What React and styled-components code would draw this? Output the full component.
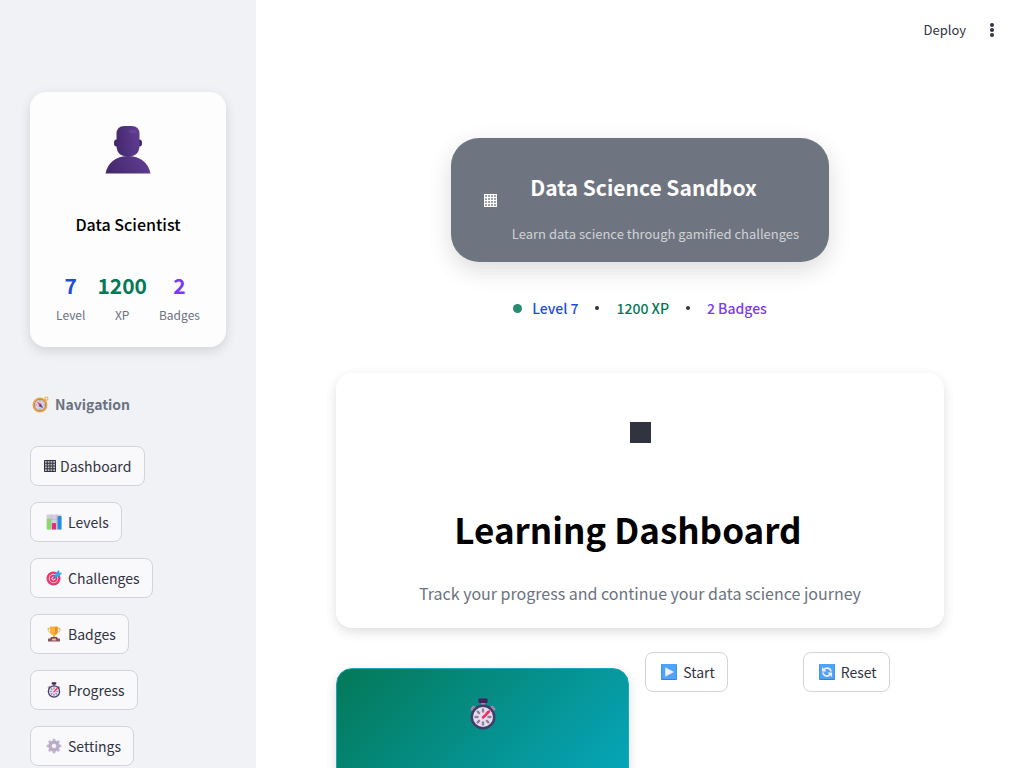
import React from "react";
import styled, { createGlobalStyle } from "styled-components";

const GlobalStyle = createGlobalStyle`
  *, *::before, *::after { box-sizing: border-box; }
  body {
    margin: 0;
    background: #ffffff;
    color: #31333f;
    font-family: "Source Sans Pro", "Noto Sans CJK SC", "Noto Sans", sans-serif;
    font-size: 14px;
    line-height: 24px;
  }
  h1, h2, h3, p, dl, dd, ul { margin: 0; padding: 0; }
  button { font: inherit; color: inherit; cursor: pointer; }
`;

const Shell = styled.div`
  display: flex;
  height: 100vh;
  overflow: hidden;
`;

const Sidebar = styled.aside`
  flex: 0 0 25%;
  max-width: 300px;
  overflow-y: auto;
  scrollbar-width: none;
  padding: 92px 30px 32px;
  background: #f0f2f6;
`;

const Main = styled.main`
  flex: 1;
  min-width: 0;
  overflow-y: auto;
  scrollbar-width: none;
`;

const Topbar = styled.header`
  display: flex;
  align-items: center;
  justify-content: flex-end;
  gap: 10px;
  height: 60px;
  padding-right: 16px;
`;

const PlainButton = styled.button`
  display: flex;
  align-items: center;
  justify-content: center;
  min-width: 32px;
  height: 32px;
  padding: 0;
  border: 0;
  background: none;
  font-size: 13px;
`;

const Content = styled.div`
  display: flex;
  flex-direction: column;
  padding: 78px 80px 80px;
`;

const ProfileCard = styled.section`
  display: flex;
  flex-direction: column;
  align-items: center;
  height: 255px;
  padding-top: 32px;
  border-radius: 16px;
  background: #fdfdfe;
  box-shadow: 0 4px 12px rgba(0, 0, 0, 0.13);
`;

const ProfileName = styled.h3`
  margin-top: 36px;
  color: #000000;
  font-size: 16px;
  font-weight: 500;
  line-height: 28px;
`;

const Stats = styled.dl`
  display: flex;
  justify-content: center;
  gap: 12px;
  margin-top: 29px;
`;

const Stat = styled.div`
  display: flex;
  flex-direction: column-reverse;
  align-items: center;
`;

const StatValue = styled.dd`
  color: ${(p) => p.$color};
  font-size: 21px;
  font-weight: 700;
  line-height: 36px;
`;

const StatLabel = styled.dt`
  color: #6b7280;
  font-size: 12px;
  line-height: 24px;
`;

const NavTitle = styled.h2`
  display: flex;
  align-items: center;
  gap: 6px;
  margin: 45px 0 30px 2px;
  color: #6b7280;
  font-size: 14px;
  font-weight: 700;
  line-height: 24px;
`;

const NavList = styled.nav`
  display: flex;
  flex-direction: column;
  align-items: flex-start;
  gap: 16px;
`;

const Button = styled.button`
  display: inline-flex;
  align-items: center;
  gap: ${(p) => (p.$tight ? 4 : 6)}px;
  height: 40px;
  padding: 0 ${(p) => (p.$tight ? 13 : 12)}px 0 ${(p) => (p.$tight ? 13 : 15)}px;
  border: 1px solid #d2d4d9;
  border-radius: 8px;
  background: ${(p) => (p.$plain ? "#ffffff" : "#f9f9fb")};
  white-space: nowrap;
`;

const Banner = styled.section`
  display: flex;
  align-items: center;
  align-self: center;
  gap: 15px;
  height: 124px;
  padding: 0 30px 0 33px;
  border-radius: 28px;
  background: #6f7580;
  color: #ffffff;
  box-shadow: 0 8px 24px rgba(0, 0, 0, 0.14);
`;

const BannerText = styled.div`
  display: flex;
  flex-direction: column;
  gap: 19px;
  padding-top: 16px;
`;

const BannerTitle = styled.h2`
  padding-right: 24px;
  font-size: 21px;
  font-weight: 700;
  line-height: 32px;
  text-align: center;
`;

const BannerNote = styled.p`
  color: #d0d2d6;
  font-size: 13px;
  line-height: 24px;
  text-align: center;
`;

const StatusLine = styled.div`
  display: flex;
  align-items: center;
  justify-content: center;
  gap: 17px;
  margin-top: 34px;
  font-weight: 500;
`;

const StatusItem = styled.span`
  display: inline-flex;
  align-items: center;
  gap: 10px;
  color: ${(p) => p.$color};
`;

const Dot = styled.span`
  width: ${(p) => p.$size}px;
  height: ${(p) => p.$size}px;
  border-radius: 50%;
  background: ${(p) => p.$color};
`;

const Hero = styled.section`
  display: flex;
  flex-direction: column;
  align-items: center;
  height: 255px;
  margin-top: 53px;
  padding-top: 49px;
  border-radius: 16px;
  background: #ffffff;
  box-shadow: 0 4px 12px rgba(0, 0, 0, 0.13);
`;

const HeroTitle = styled.h1`
  margin-top: 58px;
  padding-right: 24px;
  color: #000000;
  font-size: 35px;
  font-weight: 700;
  line-height: 56px;
`;

const HeroNote = styled.p`
  margin-top: 23px;
  color: #6b7280;
  font-size: 16px;
  line-height: 26px;
`;

const Columns = styled.div`
  display: flex;
  gap: 16px;
  margin-top: 24px;
`;

const Column = styled.div`
  flex: 1 1 calc(${(p) => p.$share}% - 16px);
  min-width: 0;
`;

const TimerCard = styled.section`
  display: flex;
  justify-content: center;
  height: 220px;
  margin-top: 16px;
  padding-top: 29px;
  border: 1px solid #18a9ba;
  border-radius: 16px;
  background: linear-gradient(135deg, #047857, #06a7bd 80%);
  box-shadow: 0 4px 12px rgba(0, 0, 0, 0.13);
`;

function Avatar() {
  return (
    <svg width="48" height="50" viewBox="0 0 48 50" aria-hidden="true">
      <defs>
        <linearGradient id="skin" x1="0" y1="0.4" x2="1" y2="0.2">
          <stop offset="0" stopColor="#452a6e" />
          <stop offset="1" stopColor="#603d94" />
        </linearGradient>
      </defs>
      <path d="M1.500 49.500C3.500 39 12 32 24 32s20.500 7 22.500 17.500z" fill="url(#skin)" />
      <ellipse cx="12.500" cy="19" rx="2.500" ry="3.500" fill="#3d2368" />
      <ellipse cx="35.500" cy="19" rx="2.500" ry="3.500" fill="#3d2368" />
      <path d="M12.500 10Q12.500 2 20.500 2h7Q35.500 2 35.500 10v12Q35 32.500 24 32.500T12.500 22z" fill="url(#skin)" />
      <ellipse cx="29" cy="7.500" rx="4" ry="2" fill="#70499f" opacity="0.6" />
    </svg>
  );
}

function Grid({ size = 12, color = "#31333f" }) {
  return (
    <svg width={size} height={size} viewBox="0 0 12 12" aria-hidden="true">
      <rect width="12" height="12" fill={color} opacity="0.3" />
      <path
        d="M.5.500h11v11H.5zM3.250.500v11M6 .500v11M8.750.500v11M.5 3.250h11M.5 6h11M.5 8.750h11"
        fill="none"
        stroke={color}
        strokeWidth="1"
      />
    </svg>
  );
}

function Stopwatch({ width = 16, height = 16 }) {
  const ticks = [0, 45, 90, 135, 180, 225, 270, 315];
  return (
    <svg width={width} height={height} viewBox="0 0 32 32" aria-hidden="true">
      <path d="M14 3h4v6h-4z" fill="#998ea4" />
      <rect x="11.500" y=".5" width="9" height="4.500" rx="1" fill="#45205f" />
      <path d="M4.500 11l2-2.500 2.500 1.500-3 3zM27.500 11l-2-2.500-2.500 1.500 3 3z" fill="#998ea4" stroke="#998ea4" strokeWidth="2" strokeLinejoin="round" />
      <circle cx="16" cy="19" r="12.500" fill="#433b6b" />
      <circle cx="16" cy="19" r="10" fill="#e6dff0" />
      {ticks.map((a) => (
        <path key={a} d="M16 11.500v2" stroke="#8e819d" strokeWidth="2.400" strokeLinecap="round" transform={`rotate(${a} 16 19)`} />
      ))}
      <path d="M16 19.500L22 13.500" stroke="#f82f60" strokeWidth="2.500" strokeLinecap="round" />
    </svg>
  );
}

function Compass() {
  return (
    <svg width="17" height="17" viewBox="0 0 32 32" aria-hidden="true">
      <circle cx="27" cy="5" r="3" fill="none" stroke="#f4b13d" strokeWidth="2" />
      <path d="M22 8l4-3 2 3-4 3z" fill="#f2b247" />
      <circle cx="15" cy="17" r="14" fill="#e9a53f" />
      <circle cx="15" cy="17" r="10.500" fill="#d8d1e1" stroke="#b07b53" strokeWidth="1.500" />
      <path d="M9 11l9 4-4 4z" fill="#e74667" />
      <path d="M21 23l-9-4 5-4z" fill="#5f4778" />
      <path d="M15 8v3M15 23v3M6 17h3M21 17h3" stroke="#9b8aa9" strokeWidth="1.500" />
    </svg>
  );
}

function Chart() {
  return (
    <svg width="16" height="16" viewBox="0 0 32 32" aria-hidden="true">
      <rect x="1" y="1" width="30" height="30" rx="2" fill="#d5cddd" />
      <path d="M1 11h30M1 21h30M11 1v30M21 1v30" stroke="#bbb1c5" strokeWidth="1" />
      <path d="M2 31V11q0-2 2-2h4q2 0 2 2v20z" fill="#86db65" />
      <path d="M12 31V20q0-2 2-2h4q2 0 2 2v11z" fill="#e22c77" />
      <path d="M23 31V6q0-2 2-2h4q2 0 2 2v25z" fill="#258be3" />
    </svg>
  );
}

function Target() {
  return (
    <svg width="16" height="16" viewBox="0 0 32 32" aria-hidden="true">
      <circle cx="15" cy="17" r="14" fill="#e7386f" />
      <circle cx="15" cy="17" r="9.500" fill="#eec6da" />
      <circle cx="15" cy="17" r="7.500" fill="#e7386f" />
      <circle cx="15" cy="17" r="4" fill="#f1dce9" />
      <circle cx="15" cy="17" r="2" fill="#e7386f" />
      <path d="M15 17L26 7" stroke="#247bb9" strokeWidth="2.500" />
      <path d="M18 14l1-8 7-6 1 5 5 1-6 7z" fill="#35a7ef" />
    </svg>
  );
}

function Trophy() {
  return (
    <svg width="16" height="16" viewBox="0 0 32 32" aria-hidden="true">
      <path d="M9 4.500H4q0 9 8 9.500M23 4.500h5q0 9-8 9.500" fill="none" stroke="#edaa42" strokeWidth="2" />
      <path d="M8 1h16v7q0 9-6 11v5h-4v-5Q8 17 8 8z" fill="#f6b335" />
      <path d="M18 2h5v7q0 6-5 8z" fill="#e98b31" />
      <path d="M10 22h12l2 4H8z" fill="#76455b" />
      <rect x="4" y="25" width="24" height="6" rx="1" fill="#8b5366" />
      <rect x="12" y="25" width="8" height="4" rx="1" fill="#f2c267" />
    </svg>
  );
}

function Gear() {
  const teeth = [0, 45, 90, 135, 180, 225, 270, 315];
  return (
    <svg width="16" height="16" viewBox="0 0 32 32" aria-hidden="true">
      {teeth.map((a) => (
        <path key={a} d="M12.500 8l1-6q2.500-2 5 0l1 6z" fill="#c3b7d3" transform={`rotate(${a} 16 16)`} />
      ))}
      <circle cx="16" cy="16" r="8" fill="none" stroke="#b9acca" strokeWidth="6" />
      <circle cx="16" cy="16" r="5.500" fill="#f4f1f8" stroke="#958aa3" strokeWidth="1" />
    </svg>
  );
}

function BlueTile({ children }) {
  return (
    <svg width="16" height="16" viewBox="0 0 32 32" aria-hidden="true">
      <rect width="32" height="32" rx="2" fill="#3c80dc" />
      <rect x="1" width="30" height="30" rx="2" fill="#4ca5fa" />
      {children}
    </svg>
  );
}

function Play() {
  return (
    <BlueTile>
      <path d="M9 7.500v17L25 16z" fill="#f5eefb" stroke="#f5eefb" strokeLinejoin="round" />
    </BlueTile>
  );
}

function Cycle() {
  return (
    <BlueTile>
      <path d="M24 15q-1-7-8-7-4 0-6 3M8 17q1 7 8 7 4 0 6-3" fill="none" stroke="#f5eefb" strokeWidth="3.500" />
      <path d="M6 6v9h9zM26 26v-9h-9z" fill="#f5eefb" />
    </BlueTile>
  );
}

function Kebab() {
  return (
    <svg width="6" height="16" viewBox="0 0 6 16" fill="#31333f" aria-hidden="true">
      <circle cx="3" cy="3" r="2" />
      <circle cx="3" cy="8" r="2" />
      <circle cx="3" cy="13" r="2" />
    </svg>
  );
}

const stats = [
  { label: "Level", value: "7", color: "#1d4ed8" },
  { label: "XP", value: "1200", color: "#047857" },
  { label: "Badges", value: "2", color: "#7c3aed" },
];

const navItems = [
  { label: "Dashboard", Icon: Grid, tight: true },
  { label: "Levels", Icon: Chart },
  { label: "Challenges", Icon: Target },
  { label: "Badges", Icon: Trophy },
  { label: "Progress", Icon: Stopwatch },
  { label: "Settings", Icon: Gear },
];

export default function App() {
  return (
    <Shell>
      <GlobalStyle />
      <Sidebar>
        <ProfileCard>
          <Avatar />
          <ProfileName>Data Scientist</ProfileName>
          <Stats>
            {stats.map((s) => (
              <Stat key={s.label}>
                <StatLabel>{s.label}</StatLabel>
                <StatValue $color={s.color}>{s.value}</StatValue>
              </Stat>
            ))}
          </Stats>
        </ProfileCard>
        <NavTitle>
          <Compass />
          Navigation
        </NavTitle>
        <NavList>
          {navItems.map(({ label, Icon, tight }) => (
            <Button key={label} type="button" $tight={tight}>
              <Icon />
              {label}
            </Button>
          ))}
        </NavList>
      </Sidebar>
      <Main>
        <Topbar>
          <PlainButton type="button">Deploy</PlainButton>
          <PlainButton type="button" aria-label="Main menu">
            <Kebab />
          </PlainButton>
        </Topbar>
        <Content>
          <Banner>
            <Grid size={13} color="#ffffff" />
            <BannerText>
              <BannerTitle>Data Science Sandbox</BannerTitle>
              <BannerNote>Learn data science through gamified challenges</BannerNote>
            </BannerText>
          </Banner>
          <StatusLine>
            <StatusItem $color="#1d4ed8">
              <Dot $size={9} $color="#2a8c6f" />
              Level 7
            </StatusItem>
            <Dot $size={4} $color="#31333f" />
            <StatusItem $color="#047857">1200 XP</StatusItem>
            <Dot $size={4} $color="#31333f" />
            <StatusItem $color="#7c3aed">2 Badges</StatusItem>
          </StatusLine>
          <Hero>
            <svg width="21" height="21" viewBox="0 0 21 21" aria-hidden="true">
              <rect width="21" height="21" fill="#31333f" />
            </svg>
            <HeroTitle>Learning Dashboard</HeroTitle>
            <HeroNote>Track your progress and continue your data science journey</HeroNote>
          </Hero>
          <Columns>
            <Column $share={50}>
              <TimerCard>
                <Stopwatch width={32} height={32} />
              </TimerCard>
            </Column>
            <Column $share={25}>
              <Button type="button" $plain>
                <Play />
                Start
              </Button>
            </Column>
            <Column $share={25}>
              <Button type="button" $plain>
                <Cycle />
                Reset
              </Button>
            </Column>
          </Columns>
        </Content>
      </Main>
    </Shell>
  );
}
